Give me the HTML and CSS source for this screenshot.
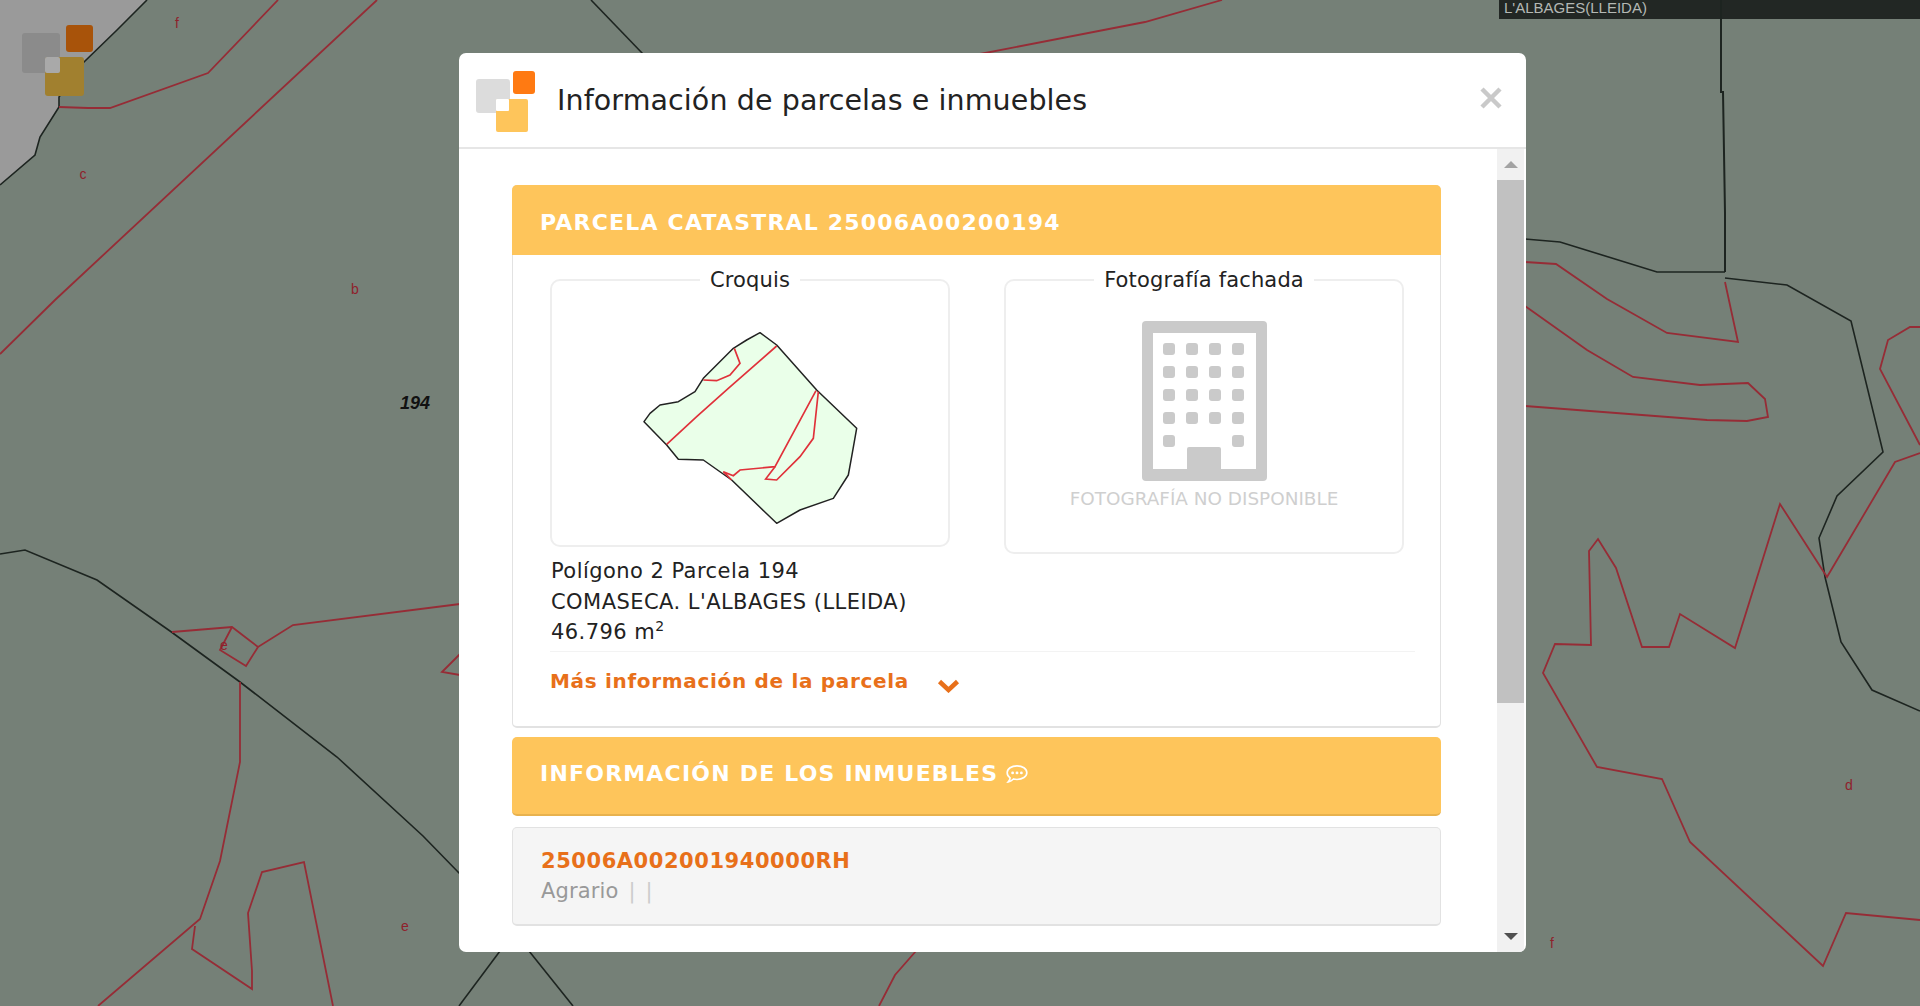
FILE: index.html
```html
<!DOCTYPE html>
<html lang="es">
<head>
    <meta charset="UTF-8">
    <meta name="viewport" content="width=device-width, initial-scale=1.0">
    <title>Información de parcelas e inmuebles</title>
    <link rel="stylesheet" href="styles.css">
</head>
<body>
    <!-- Mapa de fondo -->
    <svg class="map" viewBox="0 0 1920 1006" width="1920" height="1006">
        <polygon class="map-corner" points="0,0 147,0 117,30 83,63 59,97 59,107 40,137 35,155 0,185"/>
        <g class="line-black">
            <polyline points="147,0 117,30 83,63 59,97 59,107 40,137 35,155 0,185"/>
            <polyline points="0,554 25,550 97,580 170,631 240,682 337,757 423,836 460,874"/>
            <polyline points="459,1006 500,951"/>
            <polyline points="529,951 573,1006"/>
            <polyline points="591,0 643,54"/>
            <polyline points="1725,272 1657,272 1560,242 1525,239"/>
            <polyline points="1725,278 1787,285 1851,321 1883,452 1837,496 1819,538 1825,577 1841,642 1872,690 1920,711"/>
        </g>
        <g class="line-red">
            <polyline points="59,107 88,108 110,108 208,73 278,0"/>
            <polyline points="377,0 55,300 0,354"/>
            <polyline points="172,632 232,627 258,647 293,625 460,604"/>
            <polyline points="232,627 220,650 246,666 258,647"/>
            <polyline points="460,654 442,672 460,675"/>
            <polyline points="240,682 240,762 220,861 200,919 98,1006"/>
            <polyline points="195,926 192,949 252,989 252,971 248,913 262,872 304,862 333,1006"/>
            <polyline points="879,1006 895,975 916,951"/>
            <polyline points="980,54 1145,22 1222,0"/>
            <polyline points="1525,262 1556,264 1607,299 1667,333 1738,342 1725,282"/>
            <polyline points="1525,306 1587,350 1633,377 1700,385 1748,383 1765,399 1768,417 1747,421 1707,420 1525,406"/>
            <polyline points="1920,327 1910,327 1888,340 1880,369 1920,445"/>
            <polyline points="1920,453 1895,462 1827,577 1780,504 1735,648 1680,614 1669,647 1642,647 1616,568 1598,539 1589,551 1591,645 1555,644 1543,673 1597,767 1662,779 1690,842 1823,966 1846,913 1920,920"/>
        </g>
        <g class="map-letters">
            <text x="177" y="28">f</text>
            <text x="83" y="179">c</text>
            <text x="355" y="294">b</text>
            <text x="224" y="650">e</text>
            <text x="405" y="931">e</text>
            <text x="1849" y="790">d</text>
            <text x="1552" y="948">f</text>
        </g>
        <text class="map-number" x="415" y="409">194</text>
        <!-- Logo atenuado -->
        <rect x="22" y="33" width="38" height="40" rx="3" fill="#8b8b8b"/>
        <rect x="66" y="25" width="27" height="27" rx="3" fill="#a8530a"/>
        <rect x="45" y="57" width="39" height="39" rx="3" fill="#a1802f"/>
        <rect x="45" y="57" width="15" height="16" rx="2" fill="#a9a9a9"/>
    </svg>

    <div class="location-bar"><span>L'ALBAGES(LLEIDA)</span></div>
    <svg class="map-over" viewBox="0 0 8 272" width="8" height="272"><polyline points="2,0 2,92 4,92 6,213 6,272"/></svg>

    <!-- Ventana de información -->
    <div class="modal">
        <div class="modal-header">
            <svg class="modal-logo" viewBox="0 0 60 62" width="60" height="62">
                <rect x="0" y="8" width="34" height="34" rx="3" fill="#dcdcdc"/>
                <rect x="37" y="0" width="22" height="23" rx="3" fill="#ff7a12"/>
                <rect x="20" y="28" width="32" height="33" rx="2" fill="#fec55b"/>
                <rect x="20" y="28" width="13" height="12" rx="1" fill="#fff"/>
            </svg>
            <h1 class="modal-title">Información de parcelas e inmuebles</h1>
            <button class="modal-close" aria-label="Cerrar">
                <svg viewBox="0 0 22 22" width="22" height="22"><path d="M2 2 20 20M20 2 2 20"/></svg>
            </button>
        </div>

        <div class="modal-body">
            <div class="modal-content">
                <!-- Parcela -->
                <div class="panel">
                    <div class="panel-heading panel-heading-first">PARCELA CATASTRAL 25006A00200194</div>
                    <div class="panel-body">
                        <div class="photo-grid">
                            <div>
                                <fieldset class="photo-box sketch-box">
                                    <legend>Croquis</legend>
                                    <svg class="sketch" viewBox="30 0 840 690" width="280" height="230">
                                        <polygon class="sketch-plot" points="132,335 150,310 180,285 235,275 285,245 310,205 400,115 440,90 480,68 530,105 650,240 770,355 755,440 745,495 700,565 600,600 530,640 395,510 310,450 235,448 200,405"/>
                                        <g class="sketch-lines">
                                            <polyline points="200,403 290,320 385,235 530,108"/>
                                            <polyline points="403,115 420,160 390,195 350,212 310,210"/>
                                            <polyline points="648,242 525,470 420,480 400,497 370,485 395,510"/>
                                            <polyline points="655,245 640,385 600,440 530,510 497,507 525,470"/>
                                        </g>
                                    </svg>
                                </fieldset>
                                <div class="plot-data">
                                    Polígono 2 Parcela 194<br>
                                    COMASECA. L'ALBAGES (LLEIDA)<br>
                                    46.796 m<sup>2</sup>
                                </div>
                            </div>
                            <fieldset class="photo-box facade-box">
                                <legend>Fotografía fachada</legend>
                                <svg class="building" viewBox="0 0 125 160" width="125" height="160">
                                    <rect width="125" height="160" rx="4" fill="#cacaca"/>
                                    <rect x="11" y="12" width="103" height="136" fill="#fff"/>
                                    <g fill="#cacaca">
                                        <rect x="45" y="126" width="34" height="24" rx="2"/>
                                        <rect x="21" y="22" width="12" height="12" rx="3"/><rect x="44" y="22" width="12" height="12" rx="3"/><rect x="67" y="22" width="12" height="12" rx="3"/><rect x="90" y="22" width="12" height="12" rx="3"/>
                                        <rect x="21" y="45" width="12" height="12" rx="3"/><rect x="44" y="45" width="12" height="12" rx="3"/><rect x="67" y="45" width="12" height="12" rx="3"/><rect x="90" y="45" width="12" height="12" rx="3"/>
                                        <rect x="21" y="68" width="12" height="12" rx="3"/><rect x="44" y="68" width="12" height="12" rx="3"/><rect x="67" y="68" width="12" height="12" rx="3"/><rect x="90" y="68" width="12" height="12" rx="3"/>
                                        <rect x="21" y="91" width="12" height="12" rx="3"/><rect x="44" y="91" width="12" height="12" rx="3"/><rect x="67" y="91" width="12" height="12" rx="3"/><rect x="90" y="91" width="12" height="12" rx="3"/>
                                        <rect x="21" y="114" width="12" height="12" rx="3"/><rect x="90" y="114" width="12" height="12" rx="3"/>
                                    </g>
                                </svg>
                                <div class="no-photo">FOTOGRAFÍA NO DISPONIBLE</div>
                            </fieldset>
                        </div>
                        <div class="more-info">
                            <span>Más información de la parcela</span>
                            <svg viewBox="0 0 23 14" width="23" height="14"><path d="M2.5 2.5 11.500 11 20.500 2.500"/></svg>
                        </div>
                    </div>
                </div>

                <!-- Inmuebles -->
                <div class="panel-heading panel-heading-solo">
                    INFORMACIÓN DE LOS INMUEBLES
                    <svg viewBox="0 0 22 20" width="24" height="22">
                        <path class="bubble" d="M11 2.500C16 2.500 20 5.200 20 8.800 20 12.400 16 15 11 15 9.800 15 8.800 14.900 7.800 14.600 6.500 15.900 5 16.800 3 17.200 4 16 4.600 14.800 4.700 13.500 3 12.300 2 10.700 2 8.800 2 5.200 6 2.500 11 2.500Z"/>
                        <circle class="bubble-dot" cx="7" cy="9" r="1.300"/><circle class="bubble-dot" cx="11" cy="9" r="1.300"/><circle class="bubble-dot" cx="15" cy="9" r="1.300"/>
                    </svg>
                </div>
                <div class="property">
                    <div class="property-code">25006A002001940000RH</div>
                    <div class="property-type">Agrario <span>|</span> <span>|</span></div>
                </div>
            </div>

            <div class="scrollbar">
                <div class="scroll-btn"><i class="arrow-up"></i></div>
                <div class="scroll-thumb"></div>
                <div class="scroll-track"></div>
                <div class="scroll-btn"><i class="arrow-down"></i></div>
            </div>
        </div>
    </div>
</body>
</html>
```
FILE: styles.css
```css
html, body { margin: 0; padding: 0; height: 100%; overflow: hidden; }
body { position: relative; background: #758077; font-family: "DejaVu Sans", Verdana, sans-serif; color: #222; }

/* mapa */
.map { position: absolute; left: 0; top: 0; display: block; }
.map-corner { fill: #9a9a9a; }
.line-black polyline { fill: none; stroke: #1d2420; stroke-width: 1.6; }
.line-red polyline { fill: none; stroke: #962c36; stroke-width: 1.8; }
.map-letters text { fill: #8f1f2c; font-family: "Liberation Sans", sans-serif; font-size: 14px; text-anchor: middle; }
.map-number { fill: #111; font-family: "Liberation Sans", sans-serif; font-size: 18px; font-style: italic; font-weight: bold; text-anchor: middle; }
.location-bar { position: absolute; left: 1499px; right: 0; top: 0; height: 19px; background: #222724; color: #b4b8b4; font-family: "Liberation Sans", Arial, sans-serif; font-size: 15px; line-height: 16px; padding-left: 5px; box-sizing: border-box; }
.map-over { position: absolute; left: 1719px; top: 0; }
.map-over polyline { fill: none; stroke: #1d2420; stroke-width: 2; }

/* ventana */
.modal { position: absolute; left: 459px; top: 53px; width: 1067px; height: 899px; background: #fff; border-radius: 7px; display: flex; flex-direction: column; overflow: hidden; }
.modal-header { height: 94px; flex: none; display: flex; align-items: center; padding-left: 17px; border-bottom: 2px solid #e6e6e6; position: relative; }
.modal-logo { flex: none; margin-top: 4px; }
.modal-title { margin: 0 0 0 21px; font-size: 28.500px; font-weight: normal; letter-spacing: .1px; color: #222; }
.modal-close { position: absolute; right: 24px; top: 34px; border: 0; padding: 0; background: none; line-height: 0; }
.modal-close path { fill: none; stroke: #c9c9c9; stroke-width: 4.500; }

.modal-body { flex: 1; display: flex; min-height: 0; }
.modal-content { flex: 1; padding: 36px 56px 0 53px; }

.panel { background: #fff; border: 1px solid #e2e2e2; border-bottom-width: 2px; border-radius: 5px; height: 543px; box-sizing: border-box; }
.panel-heading { background: #fec55b; color: #fff; font-weight: bold; font-size: 22px; letter-spacing: 1.200px; padding-left: 28px; display: flex; align-items: center; box-sizing: border-box; }
.panel-heading-first { height: 70px; margin: -1px -1px 0; padding-top: 5px; border-radius: 5px 5px 0 0; }
.panel-heading-solo { height: 79px; margin-top: 9px; padding-bottom: 4px; border-radius: 5px; border-bottom: 2px solid #e8b24e; }
.panel-heading-solo svg { margin-left: 7px; }
.bubble { fill: none; stroke: #fff; stroke-width: 1.500; }
.bubble-dot { fill: #fff; }
.panel-body { padding: 13px 25px 0 37px; }

.photo-grid { display: grid; grid-template-columns: 400px 400px; column-gap: 54px; align-items: start; }
.photo-box { margin: 0; padding: 0; border: 2px solid #eeeeee; border-radius: 10px; min-width: 0; box-sizing: border-box; text-align: center; }
.photo-box legend { font-size: 21px; letter-spacing: .15px; padding: 0 10px; color: #222; line-height: 24px; }
.sketch-box { height: 279px; }
.facade-box { height: 286px; }
.sketch { display: block; margin: 18px auto 0; }
.sketch-plot { fill: #eaffe9; stroke: #222; stroke-width: 4.500; stroke-linejoin: round; }
.sketch-lines polyline { fill: none; stroke: #e0313a; stroke-width: 5; }
.building { display: block; margin: 29px auto 0; }
.no-photo { color: #cfcfcf; font-size: 18.400px; margin-top: 7px; }
.plot-data { font-size: 21px; letter-spacing: .45px; line-height: 30.500px; margin-top: 9px; padding-left: 1px; }
.plot-data sup { font-size: 14px; line-height: 0; }

.more-info { border-top: 1px solid #f3f3f3; margin-top: 3px; padding-top: 17px; color: #e8701a; font-weight: bold; font-size: 20px; letter-spacing: .68px; display: flex; align-items: center; }
.more-info svg { margin: 10px 0 0 28px; }
.more-info path { fill: none; stroke: #e8701a; stroke-width: 4.500; }

.property { margin-top: 11px; height: 99px; background: #f5f5f5; border: 1px solid #e2e2e2; border-bottom-width: 2px; border-radius: 5px; box-sizing: border-box; padding: 18px 0 0 28px; }
.property-code { color: #e8701a; font-weight: bold; font-size: 21px; letter-spacing: .55px; line-height: 30px; }
.property-type { color: #999; font-size: 21px; letter-spacing: .15px; line-height: 31px; }
.property-type span { color: #ccc; margin-left: 3px; }

/* barra de desplazamiento */
.scrollbar { flex: none; width: 27px; margin-right: 2px; background: #f1f1f1; display: flex; flex-direction: column; }
.scroll-btn { height: 31px; display: flex; align-items: center; justify-content: center; }
.scroll-thumb { height: 523px; background: #c1c1c1; }
.scroll-track { flex: 1; }
.arrow-up { width: 0; height: 0; border: 7.500px solid transparent; border-top: 0; border-bottom: 7px solid #a3a3a3; }
.arrow-down { width: 0; height: 0; border: 7.500px solid transparent; border-bottom: 0; border-top: 7px solid #505050; }
```
